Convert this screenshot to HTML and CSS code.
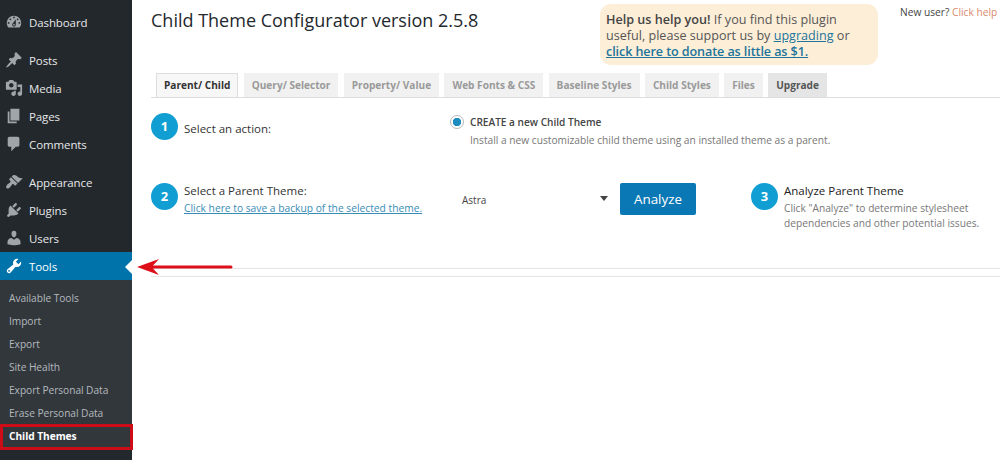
FILE: index.html
```html
<!DOCTYPE html>
<html lang="en">
<head>
<meta charset="utf-8">
<title>Child Theme Configurator</title>
<link rel="stylesheet" href="styles.css">
</head>
<body>
<div class="page">
  <nav class="sidebar">
    <ul class="menu menu-first">
      <li class="item"><svg class="icon" viewBox="0 0 20 20"><path d="M3.76 16h12.48c1.1-1.37 1.76-3.11 1.76-5 0-4.42-3.58-8-8-8s-8 3.58-8 8c0 1.89.66 3.63 1.76 5zM10 4c.55 0 1 .45 1 1s-.45 1-1 1-1-.45-1-1 .45-1 1-1zM6 6c.55 0 1 .45 1 1s-.45 1-1 1-1-.45-1-1 .45-1 1-1zm8 0c.55 0 1 .45 1 1s-.45 1-1 1-1-.45-1-1 .45-1 1-1zm-5.37 5.55L12 7v6c0 1.1-.9 2-2 2s-2-.9-2-2c0-.57.24-1.08.63-1.45zM4 10c.55 0 1 .45 1 1s-.45 1-1 1-1-.45-1-1 .45-1 1-1zm12 0c.55 0 1 .45 1 1s-.45 1-1 1-1-.45-1-1 .45-1 1-1zm-5 3c0-.55-.45-1-1-1s-1 .45-1 1 .45 1 1 1 1-.45 1-1z" fill-rule="evenodd"/></svg>Dashboard</li>
    </ul>
    <ul class="menu">
      <li class="item"><svg class="icon" viewBox="0 0 20 20"><path d="M10.44 3.02l1.82-1.82 6.36 6.35-1.83 1.82c-1.05-.68-2.48-.57-3.41.36l-.75.75c-.92.93-1.04 2.35-.35 3.41l-1.83 1.82-2.41-2.41-2.8 2.79c-.42.42-3.38 2.71-3.8 2.29s1.86-3.39 2.28-3.81l2.79-2.79L4.1 9.36l1.83-1.82c1.05.69 2.48.57 3.4-.36l.75-.75c.93-.92 1.05-2.35.36-3.41z"/></svg>Posts</li>
      <li class="item"><svg class="icon" viewBox="0 0 20 20"><path d="M13 11V4c0-.55-.45-1-1-1h-1.67L9 1H5L3.67 3H2c-.55 0-1 .45-1 1v7c0 .55.45 1 1 1h10c.55 0 1-.45 1-1zM7 4.5c1.38 0 2.5 1.12 2.5 2.5S8.38 9.5 7 9.5 4.5 8.38 4.5 7 5.62 4.5 7 4.5zM14 6h5v10.5c0 1.38-1.12 2.5-2.5 2.5S14 17.88 14 16.5s1.12-2.5 2.5-2.5c.17 0 .34.02.5.05V9h-3V6zm-4 8.05V13h2v3.5c0 1.38-1.12 2.5-2.5 2.5S7 17.88 7 16.5 8.12 14 9.5 14c.17 0 .34.02.5.05z"/></svg>Media</li>
      <li class="item"><svg class="icon" viewBox="0 0 20 20"><path d="M6 15V2h10v13H6zm-1 1h8v2H3V5h2v11z"/></svg>Pages</li>
      <li class="item"><svg class="icon" viewBox="0 0 20 20"><path d="M5 2h9c1.1 0 2 .9 2 2v7c0 1.1-.9 2-2 2h-2l-5 5v-5H5c-1.1 0-2-.9-2-2V4c0-1.1.9-2 2-2z"/></svg>Comments</li>
    </ul>
    <ul class="menu">
      <li class="item"><svg class="icon" viewBox="0 0 20 20"><path d="M14.48 11.06L7.41 3.99l1.5-1.5c.5-.56 2.3-.47 3.51.32 1.21.8 1.43 1.28 2.91 2.1 1.18.64 2.45 1.26 4.45.85zM6.7 4.7l7.07 7.07L12 13.54c-.39.39-1.02.39-1.41 0l-1.06-1.06c-.39-.39-1.03-.39-1.42 0-.6.6-1.11 1.43-1.69 2.21-.26.35-.53.7-.84 1.01-1.35 1.35-3.1 2-4 1.1-.9-.9-.25-2.65 1.1-4 .31-.31.66-.58 1.01-.84.78-.58 1.61-1.09 2.21-1.69.39-.39.39-1.03 0-1.42L4.93 7.88c-.39-.39-.39-1.02 0-1.41z"/></svg>Appearance</li>
      <li class="item"><svg class="icon" viewBox="0 0 20 20"><path d="M13.11 4.36L9.87 7.6 8 5.73l3.24-3.24c.35-.34 1.05-.2 1.56.32.52.51.66 1.21.31 1.55zm-8 1.77l.91-1.12 9.01 9.01-1.19.84c-.71.71-2.63 1.16-3.82 1.16H6.14L4.9 17.26c-.59.59-1.54.59-2.12 0-.59-.58-.59-1.53 0-2.12l1.24-1.24v-3.88c0-1.13.4-3.19 1.09-3.89zm7.26 3.97l3.24-3.24c.34-.35 1.04-.21 1.55.31.52.51.66 1.21.31 1.55l-3.24 3.25z"/></svg>Plugins</li>
      <li class="item"><svg class="icon" viewBox="0 0 20 20"><path d="M10 9.25c-2.27 0-2.73-3.44-2.73-3.44C7 4.02 7.82 2 9.97 2c2.16 0 2.98 2.02 2.71 3.81 0 0-.41 3.44-2.68 3.44zm0 2.57L12.72 10c2.39 0 4.52 2.33 4.52 4.53v2.49s-3.65 1.13-7.24 1.13c-3.65 0-7.24-1.13-7.24-1.13v-2.49c0-2.25 1.94-4.48 4.47-4.48z"/></svg>Users</li>
      <li class="item item-active"><svg class="icon" viewBox="0 0 20 20"><path d="M16.68 9.77c-1.34 1.34-3.3 1.67-4.95.99l-5.41 6.52c-.99.99-2.59.99-3.58 0s-.99-2.59 0-3.57l6.52-5.42c-.68-1.65-.35-3.61.99-4.95 1.28-1.28 3.12-1.62 4.72-1.06l-2.89 2.89 2.82 2.82 2.86-2.87c.53 1.58.18 3.39-1.08 4.65zM3.81 16.21c.4.39 1.04.39 1.43 0 .4-.4.4-1.04 0-1.43-.39-.4-1.03-.4-1.43 0-.39.39-.39 1.03 0 1.43z"/></svg>Tools</li>
    </ul>
    <ul class="submenu">
      <li class="sub">Available Tools</li>
      <li class="sub">Import</li>
      <li class="sub">Export</li>
      <li class="sub">Site Health</li>
      <li class="sub">Export Personal Data</li>
      <li class="sub">Erase Personal Data</li>
      <li class="sub sub-current">Child Themes</li>
    </ul>
  </nav>

  <main class="content">
    <header class="head">
      <h1 class="title">Child Theme Configurator version 2.5.8</h1>
      <p class="help"><strong>Help us help you!</strong> If you find this plugin useful, please support us by <a class="help-link" href="#">upgrading</a> or <a class="help-link help-strong" href="#">click here to donate as little as $1.</a></p>
      <p class="newuser">New user? <a class="newuser-link" href="#">Click help</a></p>
    </header>

    <div class="tabs">
      <span class="tab tab-active">Parent/ Child</span>
      <span class="tab">Query/ Selector</span>
      <span class="tab">Property/ Value</span>
      <span class="tab">Web Fonts &amp; CSS</span>
      <span class="tab">Baseline Styles</span>
      <span class="tab">Child Styles</span>
      <span class="tab">Files</span>
      <span class="tab tab-upgrade">Upgrade</span>
    </div>

    <section class="row row-action">
      <div class="step step-center">
        <span class="badge">1</span>
        <span class="label">Select an action:</span>
      </div>
      <div class="choice">
        <span class="radio"></span>
        <div>
          <div class="choice-title">CREATE a new Child Theme</div>
          <div class="note">Install a new customizable child theme using an installed theme as a parent.</div>
        </div>
      </div>
    </section>

    <section class="row row-parent">
      <div class="step">
        <span class="badge">2</span>
        <div>
          <div class="label label-top">Select a Parent Theme:</div>
          <a class="backup" href="#">Click here to save a backup of the selected theme.</a>
        </div>
      </div>
      <div class="picker">
        <div class="select"><span>Astra</span><span class="caret"></span></div>
        <button class="analyze" type="button">Analyze</button>
      </div>
      <div class="step">
        <span class="badge">3</span>
        <div>
          <div class="label label-top label-dark">Analyze Parent Theme</div>
          <div class="note note-wrap">Click "Analyze" to determine stylesheet dependencies and other potential issues.</div>
        </div>
      </div>
    </section>

    <div class="band"></div>
  </main>

  <svg class="pointer" viewBox="0 0 96 18"><path d="M0 9 22 1 16 7.5H94a1.5 1.5 0 0 1 0 3H16L22 17Z"/></svg>
</div>
</body>
</html>
```

FILE: styles.css
```css
* { box-sizing: border-box; }
html, body { margin: 0; height: 100%; overflow: hidden; background: #fff; }
body { font-family: "Open Sans", "Noto Sans", sans-serif; color: #444; }
ul { list-style: none; margin: 0; padding: 0; }
p, h1 { margin: 0; }

.page { position: relative; display: flex; width: 1000px; height: 460px; overflow: hidden; }

.sidebar { flex: 0 0 132px; background: #23282d; padding-top: 8px; color: #eee; }
.menu { margin-top: 10px; }
.menu-first { margin-top: 0; }
.item { position: relative; display: flex; align-items: center; height: 28px; padding-left: 5px; font-size: 11.5px; letter-spacing: -.1px; color: #e6e7e8; }
.icon { flex: none; width: 18px; height: 18px; margin-right: 6px; fill: #a0a5aa; }
.item-active { background: #0073aa; color: #fff; }
.item-active .icon { fill: #fff; }
.item-active::after { content: ""; position: absolute; right: 0; top: 8px; border: 7px solid transparent; border-right-color: #fff; border-left-width: 0; }

.submenu { background: #32373c; padding: 7px 0 2px; }
.sub { position: relative; height: 23px; line-height: 23px; padding-left: 9px; font-size: 10.2px; letter-spacing: -.05px; color: #b4b9be; }
.sub-current { font-weight: 700; color: #fff; }
.sub-current::after { content: ""; position: absolute; inset: -1px -1px -2px 0; border: 3px solid #cc0d17; }

.content { flex: 1; min-width: 0; padding-left: 19px; }

.head { display: flex; align-items: flex-start; height: 73px; white-space: nowrap; }
.title { flex: 0 0 449px; padding-top: 6px; font-size: 18px; line-height: 28px; font-weight: 400; color: #23282d; }
.help { flex: 0 0 278px; height: 61px; margin-top: 4px; padding: 8px 6px; border-radius: 11px; background: #fdeed8; font-size: 12.6px; line-height: 16px; color: #555; white-space: normal; }
.help strong { font-weight: 600; color: #444; }
.help-link { color: #21759b; }
.help-strong { font-weight: 600; letter-spacing: -.1px; }
.newuser { margin: 5px 0 0 22px; font-size: 10.2px; line-height: 14px; color: #444; }
.newuser-link { color: #d98a6a; text-decoration: none; }

.tabs { display: flex; gap: 5.3px; height: 25px; padding-left: 5px; border-bottom: 1px solid #ddd; }
.tab { height: 24px; padding: 0 8px; background: #f1f1f1; font-size: 10.1px; font-weight: 700; line-height: 24px; color: #9a9a9a; white-space: nowrap; }
.tab-active { padding: 0 7px; border: 1px solid #ddd; border-bottom: 0; background: #f7f7f7; color: #333; line-height: 23px; }
.tab-upgrade { background: #e5e5e5; color: #555; }

.row { display: grid; grid-template-columns: 299px 301px 1fr; align-items: start; height: 85px; }
.row-action { padding-top: 15px; }

.step { display: flex; gap: 6px; align-items: flex-start; }
.step-center { align-items: center; }
.badge { flex: none; width: 27px; height: 27px; border-radius: 50%; background: #119fd3; color: #fff; font-size: 13px; font-weight: 700; line-height: 27px; text-align: center; }
.label { font-size: 11.5px; line-height: 14px; font-weight: 500; color: #333; }
.step-center .label { padding-top: 4px; }
.label-top { margin-top: 1px; }
.label-dark { color: #222; }
.backup { display: block; margin-top: 3px; font-size: 10.25px; line-height: 14px; color: #3a8cb5; white-space: nowrap; }

.choice { display: flex; gap: 6px; margin-top: 2px; }
.radio { flex: none; width: 14px; height: 14px; border: 1px solid #b4b9be; border-radius: 50%; background: radial-gradient(circle, #1e8cbe 0 4px, #fff 4.5px); }
.choice-title { font-size: 10.1px; line-height: 14px; font-weight: 600; color: #444; }
.note { margin-top: 4px; font-size: 10.2px; line-height: 14.5px; color: #777; white-space: nowrap; }
.note-wrap { white-space: normal; width: 200px; margin-top: 3px; }

.picker { display: flex; align-items: flex-start; gap: 8px; }
.select { flex: 0 0 162px; display: flex; justify-content: space-between; align-items: center; height: 34px; padding: 0 4px 0 12px; font-size: 10px; color: #444; }
.caret { width: 0; height: 0; margin-bottom: 3px; border: 4px solid transparent; border-top: 5px solid #444; border-bottom: 0; }
.analyze { width: 76px; height: 32px; border: 0; border-radius: 2px; background: #0a78b5; color: #fff; font-family: inherit; font-size: 13.4px; }

.band { height: 9px; border-top: 1px solid #e5e5e5; border-bottom: 1px solid #e5e5e5; }

.pointer { position: absolute; left: 137px; top: 258px; width: 96px; height: 18px; fill: #dd0f19; }
```
